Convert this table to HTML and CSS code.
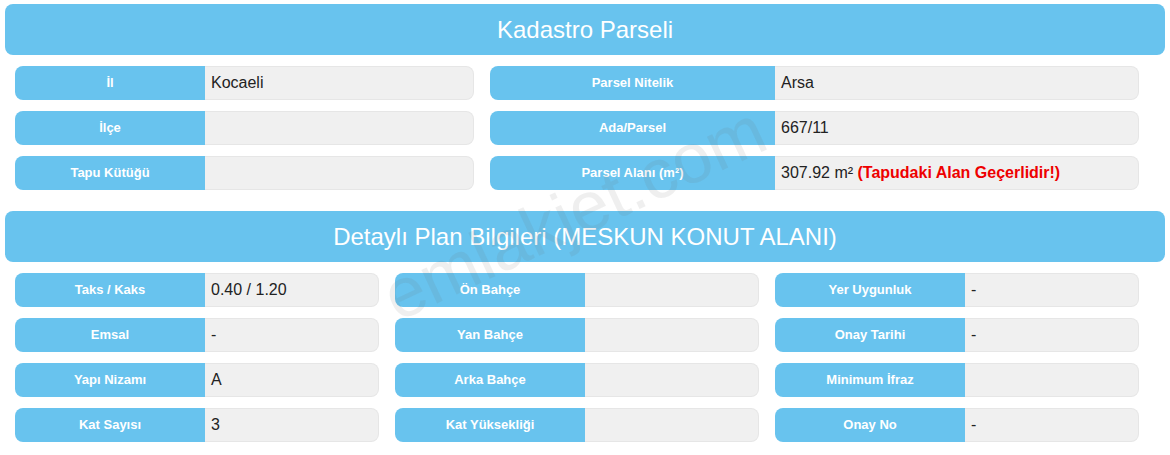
FILE: index.html
```html
<!DOCTYPE html>
<html lang="tr">
<head>
<meta charset="utf-8">
<title>Kadastro Parseli</title>
<link rel="stylesheet" href="styles.css">
</head>
<body>
<div class="page">
  <div class="section-title">Kadastro Parseli</div>
  <div class="grid grid-two">
    <div class="col">
      <div class="row"><div class="label">İl</div><div class="value">Kocaeli</div></div>
      <div class="row"><div class="label">İlçe</div><div class="value"></div></div>
      <div class="row"><div class="label">Tapu Kütüğü</div><div class="value"></div></div>
    </div>
    <div class="col col-wide">
      <div class="row"><div class="label">Parsel Nitelik</div><div class="value">Arsa</div></div>
      <div class="row"><div class="label">Ada/Parsel</div><div class="value">667/11</div></div>
      <div class="row"><div class="label">Parsel Alanı (m²)</div><div class="value">307.92 m² <span class="warn">(Tapudaki Alan Geçerlidir!)</span></div></div>
    </div>
  </div>

  <div class="section-title section-second">Detaylı Plan Bilgileri (MESKUN KONUT ALANI)</div>
  <div class="grid grid-three">
    <div class="col">
      <div class="row"><div class="label">Taks / Kaks</div><div class="value">0.40 / 1.20</div></div>
      <div class="row"><div class="label">Emsal</div><div class="value">-</div></div>
      <div class="row"><div class="label">Yapı Nizamı</div><div class="value">A</div></div>
      <div class="row"><div class="label">Kat Sayısı</div><div class="value">3</div></div>
    </div>
    <div class="col">
      <div class="row"><div class="label">Ön Bahçe</div><div class="value"></div></div>
      <div class="row"><div class="label">Yan Bahçe</div><div class="value"></div></div>
      <div class="row"><div class="label">Arka Bahçe</div><div class="value"></div></div>
      <div class="row"><div class="label">Kat Yüksekliği</div><div class="value"></div></div>
    </div>
    <div class="col">
      <div class="row"><div class="label">Yer Uygunluk</div><div class="value">-</div></div>
      <div class="row"><div class="label">Onay Tarihi</div><div class="value">-</div></div>
      <div class="row"><div class="label">Minimum İfraz</div><div class="value"></div></div>
      <div class="row"><div class="label">Onay No</div><div class="value">-</div></div>
    </div>
  </div>
  <div class="watermark">emlakjet.com</div>
</div>
</body>
</html>
```
FILE: styles.css
```css
* { box-sizing: border-box; }
html, body { margin: 0; padding: 0; background: #fff; }
body { font-family: "Liberation Sans", Arial, sans-serif; color: #222; }

.page {
  position: relative;
  width: 1170px;
  height: 455px;
  padding: 4px 5px 0 5px;
  overflow: hidden;
}

.section-title {
  height: 51px;
  background: #68c3ee;
  border-radius: 8px;
  color: #fff;
  font-size: 24px;
  display: flex;
  align-items: center;
  justify-content: center;
}
.section-second { margin-top: 21px; }

.grid {
  display: grid;
  column-gap: 16px;
  margin: 11px 0 0 10px;
  width: 1124px;
}
.grid-two { grid-template-columns: 459px 649px; }
.grid-three { grid-template-columns: 364px 364px 364px; }

.col { display: flex; flex-direction: column; gap: 11px; }

.row {
  display: flex;
  height: 34px;
}
.label {
  width: 190px;
  flex: none;
  background: #68c3ee;
  border-radius: 8px 0 0 8px;
  color: #fff;
  font-weight: bold;
  font-size: 13px;
  display: flex;
  align-items: center;
  justify-content: center;
  padding-bottom: 2px;
}
.col-wide .label { width: 285px; }

.value {
  flex: 1;
  background: #f0f0f0;
  border: 1px solid #e6e6e6;
  border-left: none;
  border-radius: 0 8px 8px 0;
  font-size: 16px;
  color: #222;
  display: flex;
  align-items: center;
  padding: 0 6px 1px 6px;
  white-space: pre;
}
.warn { color: #e00; font-weight: bold; }

.watermark {
  position: absolute;
  left: 368px;
  top: 173px;
  font-size: 70px;
  color: rgba(110, 110, 110, 0.11);
  transform: rotate(-25deg);
  transform-origin: center;
  pointer-events: none;
  white-space: nowrap;
}
```
